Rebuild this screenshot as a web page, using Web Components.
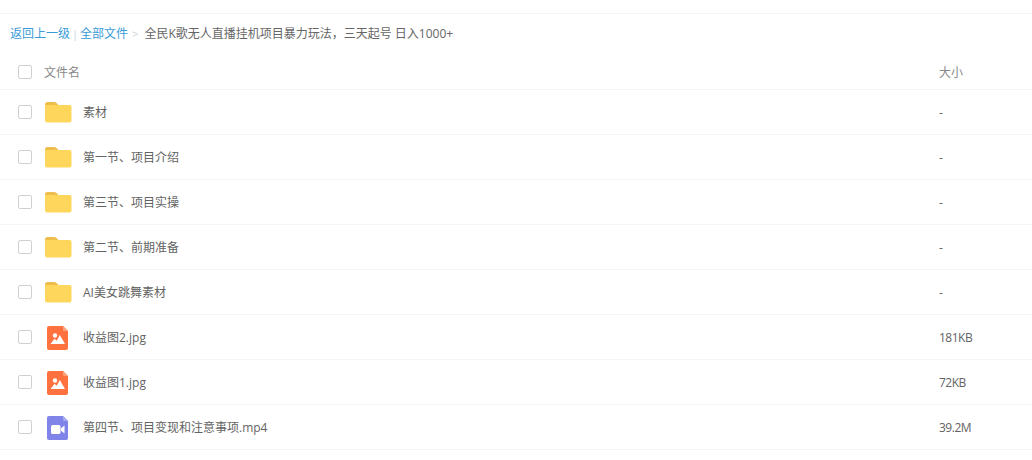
<!DOCTYPE html>
<html>
<head>
<meta charset="utf-8">
<style>
html,body{margin:0;padding:0;background:#fff;}
body{font-family:"Open Sans","Noto Sans CJK SC",sans-serif;font-size:12px;color:#636363;overflow:hidden;height:460px;}
</style>
</head>
<body>
<file-list>
    <bread-crumb slot="crumb" current="全民K歌无人直播挂机项目暴力玩法，三天起号 日入1000+"></bread-crumb>
    <file-head></file-head>
    <file-row kind="folder" name="素材" size="-"></file-row>
    <file-row kind="folder" name="第一节、项目介绍" size="-"></file-row>
    <file-row kind="folder" name="第三节、项目实操" size="-"></file-row>
    <file-row kind="folder" name="第二节、前期准备" size="-"></file-row>
    <file-row kind="folder" name="AI美女跳舞素材" size="-"></file-row>
    <file-row kind="image" name="收益图2.jpg" size="181KB"></file-row>
    <file-row kind="image" name="收益图1.jpg" size="72KB"></file-row>
    <file-row kind="video" name="第四节、项目变现和注意事项.mp4" size="39.2M"></file-row>
</file-list>
<script>
const icons = {
    folder:`<svg width="28" height="22" viewBox="0 0 28 22">
        <path d="M1 3.5Q1 1 3.5 1H10Q11.5 1 12.5 2L14.5 4H1Z" fill="#eebd4b"/>
        <path d="M1 4H25.5Q27.5 4 27.5 6V19.5Q27.5 21.5 25.5 21.5H3Q1 21.5 1 19.5Z" fill="#ffd65c"/>
    </svg>`,
    image:`<svg width="28" height="26" viewBox="0 0 28 26">
        <path d="M5 2H19L24 7V24Q24 26 22 26H5Q3 26 3 24V4Q3 2 5 2Z" fill="#ff7240"/>
        <path d="M19 2L24 7H20.500Q19 7 19 5.500Z" fill="#ffa27f"/>
        <circle cx="11" cy="11.500" r="2.200" fill="#fff"/>
        <path d="M6.500 20L10.500 14.800L12.800 16.800L15.800 11L21 20Z" fill="#fff"/>
    </svg>`,
    video:`<svg width="28" height="26" viewBox="0 0 28 26">
        <path d="M5 2H19L24 7V24Q24 26 22 26H5Q3 26 3 24V4Q3 2 5 2Z" fill="#8083e8"/>
        <path d="M19 2L24 7H20.500Q19 7 19 5.500Z" fill="#a9abf1"/>
        <rect x="7" y="11" width="9.500" height="9" rx="1.500" fill="#fff"/>
        <path d="M16.800 14.500L20.500 11.500V19.500L16.800 16.500Z" fill="#fff"/>
    </svg>`
}

class FileList extends HTMLElement{
    constructor(){
        super()
        this.attachShadow({mode:'open'}).innerHTML=`
        <style>
            :host{display:block;width:1032px;}
            .top{height:13px;border-bottom:1px solid #f5f5f5;}
        </style>
        <div class="top"></div>
        <slot name="crumb"></slot>
        <slot></slot>`
    }
}

class BreadCrumb extends HTMLElement{
    connectedCallback(){
        this.attachShadow({mode:'open'}).innerHTML=`
        <style>
            :host{display:flex;align-items:center;height:38px;padding-left:10px;color:#666;white-space:nowrap;}
            a{color:#3a9bd8;text-decoration:none;}
            .sep{color:#c4d8ea;margin:0 3px 0 2px;font-size:11px;letter-spacing:-1px;}
            .gt{color:#c9d3dc;margin:0 6px 0 4px;font-size:11px;}
        </style>
        <a>返回上一级</a><span class="sep">|</span><a>全部文件</a><span class="gt">&gt;</span><span>${this.getAttribute('current')}</span>`
    }
}

class FileCheck extends HTMLElement{
    constructor(){
        super()
        this.attachShadow({mode:'open'}).innerHTML=`
        <style>
            :host{display:block;width:12px;height:12px;border:1px solid #cfcfd4;border-radius:2px;background:#fff;}
        </style>`
    }
}

class FileHead extends HTMLElement{
    constructor(){
        super()
        this.attachShadow({mode:'open'}).innerHTML=`
        <style>
            :host{display:flex;align-items:center;height:34px;padding:3px 0 0 18px;border-bottom:1px solid #f5f5f5;color:#888;}
            .n{margin-left:12px;flex:1;}
            .s{width:93px;}
        </style>
        <file-check></file-check>
        <span class="n">文件名</span>
        <span class="s">大小</span>`
    }
}

class FileRow extends HTMLElement{
    connectedCallback(){
        this.attachShadow({mode:'open'}).innerHTML=`
        <style>
            :host{display:flex;align-items:center;height:44px;padding-left:18px;border-bottom:1px solid #f5f5f5;color:#636363;}
            .i{width:28px;height:26px;margin-left:12px;display:flex;align-items:center;justify-content:center;}
            svg{display:block;}
            .n{margin-left:11px;flex:1;}
            .s{width:93px;letter-spacing:-.5px;}
        </style>
        <file-check></file-check>
        <span class="i">${icons[this.getAttribute('kind')]}</span>
        <span class="n">${this.getAttribute('name')}</span>
        <span class="s">${this.getAttribute('size')}</span>`
    }
}

customElements.define('file-list',FileList)
customElements.define('bread-crumb',BreadCrumb)
customElements.define('file-check',FileCheck)
customElements.define('file-head',FileHead)
customElements.define('file-row',FileRow)
</script>
</body>
</html>
